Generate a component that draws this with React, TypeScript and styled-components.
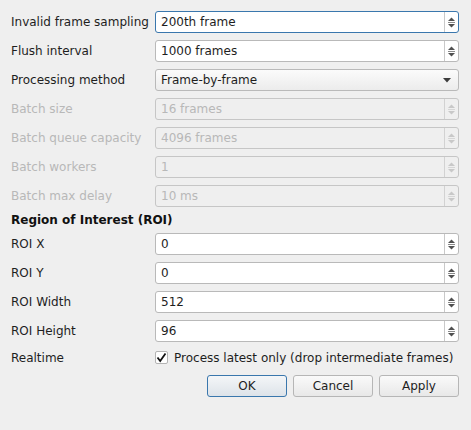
import React from 'react'
import styled, { createGlobalStyle, css } from 'styled-components'

const GlobalStyle = createGlobalStyle`
  html, body {
    margin: 0;
    padding: 0;
    background: #efefef;
  }
  body {
    font-family: 'DejaVu Sans', 'Liberation Sans', sans-serif;
    font-size: 12px;
    color: #1e1e1e;
  }
`

const Dialog = styled.div`
  width: 471px;
  height: 430px;
  box-sizing: border-box;
  padding: 11px 12px 0 11px;
  display: flex;
  flex-direction: column;
`

const Form = styled.div`
  display: grid;
  grid-template-columns: 144px 1fr;
  row-gap: 7px;
  align-items: center;
`

const Label = styled.div<{ $disabled?: boolean }>`
  color: ${p => (p.$disabled ? '#b8b8b8' : '#1e1e1e')};
  white-space: nowrap;
`

const Heading = styled.div`
  grid-column: 1 / span 2;
  font-weight: bold;
  height: 12px;
  line-height: 12px;
  color: #111;
`

const fieldBase = css`
  height: 22px;
  box-sizing: border-box;
  border-radius: 3px;
  display: flex;
  align-items: stretch;
`

const SpinBox = styled.div<{ $disabled?: boolean; $focused?: boolean }>`
  ${fieldBase};
  border: 1px solid ${p => (p.$focused ? '#3a77ad' : p.$disabled ? '#c6c6c6' : '#b9b9b9')};
  background: ${p => (p.$disabled ? '#efefef' : '#ffffff')};
  color: ${p => (p.$disabled ? '#b8b8b8' : '#1e1e1e')};
`

const SpinText = styled.div`
  flex: 1;
  padding-left: 5px;
  line-height: 20px;
`

const SpinButtons = styled.div<{ $disabled?: boolean }>`
  width: 13px;
  border-left: 1px solid ${p => (p.$disabled ? '#d2d2d2' : '#c9c9c9')};
  display: flex;
  align-items: center;
  justify-content: center;
`

const ComboBox = styled.div`
  ${fieldBase};
  border: 1px solid #b9b9b9;
  background: linear-gradient(#fbfbfb, #ececec);
  align-items: center;
  padding: 0 7px 0 5px;
`

const ComboText = styled.div`
  flex: 1;
`

const CheckRow = styled.div`
  display: flex;
  align-items: center;
  gap: 6px;
  height: 17px;
`

const CheckBox = styled.div`
  width: 13px;
  height: 13px;
  box-sizing: border-box;
  border: 1px solid #b4b4b4;
  border-radius: 2px;
  background: #fff;
  display: flex;
  align-items: center;
  justify-content: center;
`

const ButtonBar = styled.div`
  display: flex;
  justify-content: flex-end;
  gap: 6px;
  margin-top: 9px;
`

const Button = styled.div<{ $default?: boolean }>`
  width: 80px;
  height: 22px;
  box-sizing: border-box;
  border-radius: 3px;
  border: 1px solid ${p => (p.$default ? '#3a77ad' : '#b6b6b6')};
  background: ${p => (p.$default ? 'linear-gradient(#f4f6f8, #dde3e9)' : 'linear-gradient(#fafafa, #e8e8e8)')};
  display: flex;
  align-items: center;
  justify-content: center;
  color: #1e1e1e;
`

const SpinArrows: React.FC<{ disabled?: boolean }> = ({ disabled }) => {
  const c = disabled ? '#c8c8c8' : '#505050'
  return (
    <svg width="9" height="13" viewBox="0 0 9 13">
      <path d="M4.5 1.5 L8 5 L1 5 Z" fill={c} />
      <rect x="1" y="6" width="7" height="1" fill={disabled ? '#d6d6d6' : '#8a8a8a'} />
      <path d="M1 8 L8 8 L4.5 11.5 Z" fill={c} />
    </svg>
  )
}

const Spin: React.FC<{ value: string; disabled?: boolean; focused?: boolean }> = ({ value, disabled, focused }) => (
  <SpinBox $disabled={disabled} $focused={focused}>
    <SpinText>{value}</SpinText>
    <SpinButtons $disabled={disabled}>
      <SpinArrows disabled={disabled} />
    </SpinButtons>
  </SpinBox>
)

const rows: { label: string; value: string; disabled?: boolean; focused?: boolean }[] = [
  { label: 'Invalid frame sampling', value: '200th frame', focused: true },
  { label: 'Flush interval', value: '1000 frames' },
]

const batchRows = [
  { label: 'Batch size', value: '16 frames' },
  { label: 'Batch queue capacity', value: '4096 frames' },
  { label: 'Batch workers', value: '1' },
  { label: 'Batch max delay', value: '10 ms' },
]

const roiRows = [
  { label: 'ROI X', value: '0' },
  { label: 'ROI Y', value: '0' },
  { label: 'ROI Width', value: '512' },
  { label: 'ROI Height', value: '96' },
]

export default function App() {
  return (
    <>
      <GlobalStyle />
      <Dialog>
        <Form>
          {rows.map(r => (
            <React.Fragment key={r.label}>
              <Label>{r.label}</Label>
              <Spin value={r.value} focused={r.focused} />
            </React.Fragment>
          ))}
          <Label>Processing method</Label>
          <ComboBox>
            <ComboText>Frame-by-frame</ComboText>
            <svg width="8" height="5" viewBox="0 0 8 5">
              <path d="M0 0 L8 0 L4 4.5 Z" fill="#3c3c3c" />
            </svg>
          </ComboBox>
          {batchRows.map(r => (
            <React.Fragment key={r.label}>
              <Label $disabled>{r.label}</Label>
              <Spin value={r.value} disabled />
            </React.Fragment>
          ))}
          <Heading>Region of Interest (ROI)</Heading>
          {roiRows.map(r => (
            <React.Fragment key={r.label}>
              <Label>{r.label}</Label>
              <Spin value={r.value} />
            </React.Fragment>
          ))}
          <Label>Realtime</Label>
          <CheckRow>
            <CheckBox>
              <svg width="11" height="11" viewBox="0 0 11 11">
                <path d="M1.5 5.5 L4.2 9 L9.5 1.5" stroke="#111" strokeWidth="1.8" fill="none" />
              </svg>
            </CheckBox>
            <span>Process latest only (drop intermediate frames)</span>
          </CheckRow>
        </Form>
        <ButtonBar>
          <Button $default>OK</Button>
          <Button>Cancel</Button>
          <Button>Apply</Button>
        </ButtonBar>
      </Dialog>
    </>
  )
}
